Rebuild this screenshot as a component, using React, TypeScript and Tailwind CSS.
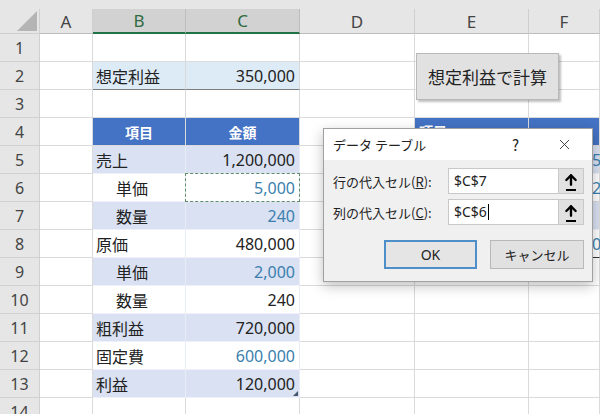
import { ArrowUp, X } from "lucide-react";

type Row = {
  n: number;
  b?: string;
  c?: string;
  indent?: boolean;
  kind?: "plain" | "goal" | "head" | "light" | "white";
  blue?: boolean;
};

const rows: Row[] = [
  { n: 1 },
  { n: 2, b: "想定利益", c: "350,000", kind: "goal" },
  { n: 3 },
  { n: 4, b: "項目", c: "金額", kind: "head" },
  { n: 5, b: "売上", c: "1,200,000", kind: "light" },
  { n: 6, b: "単価", c: "5,000", indent: true, kind: "white", blue: true },
  { n: 7, b: "数量", c: "240", indent: true, kind: "light", blue: true },
  { n: 8, b: "原価", c: "480,000", kind: "white" },
  { n: 9, b: "単価", c: "2,000", indent: true, kind: "light", blue: true },
  { n: 10, b: "数量", c: "240", indent: true, kind: "white" },
  { n: 11, b: "粗利益", c: "720,000", kind: "light" },
  { n: 12, b: "固定費", c: "600,000", kind: "white", blue: true },
  { n: 13, b: "利益", c: "120,000", kind: "light" },
  { n: 14 },
];

const cols = ["A", "B", "C", "D", "E", "F"];

const cellBase = "h-[28px] border-r border-b border-[#dadada] flex items-center";

function tableBg(kind?: Row["kind"]) {
  switch (kind) {
    case "goal":
      return "bg-[#ddebf7] border-b-[#7f7f7f]";
    case "head":
      return "bg-[#4472c4] text-white font-bold justify-center";
    case "light":
      return "bg-[#d9e1f2] border-r-[#e8ecf5] border-b-[#eef1f8]";
    case "white":
      return "bg-white border-r-[#e8ecf5] border-b-[#eef1f8]";
    default:
      return "bg-white";
  }
}

function RightSideCell({ n, col }: { n: number; col: "E" | "F" }) {
  // second table sitting behind the dialog
  let cls = "bg-white";
  let text = "";
  if (n === 4) cls = "bg-[#4472c4] text-white font-bold";
  if (n === 5 || n === 7) cls = "bg-[#d9e1f2] border-b-[#eef1f8]";
  if (col === "F") {
    if (n === 5) text = "5";
    if (n === 6) text = "2";
    if (n === 8) text = "0";
  }
  return (
    <div className={`${cellBase} ${cls} ${n === 8 && col === "F" ? "border-b-[#333]" : ""}`}>
      {col === "E" && n === 4 && <span className="pl-[4px] text-[14px]">項目</span>}
      {text && <span className="pl-[63px] text-[#3b7fae]">{text}</span>}
    </div>
  );
}

export default function App() {
  return (
    <div className="relative w-[600px] h-[414px] overflow-hidden bg-white text-[16px] text-[#222] font-['Noto_Sans','Noto_Sans_CJK_JP',sans-serif] leading-none">
      <div className="h-[9px] bg-[#e6e6e6]" />
      <div className="grid grid-cols-[40px_53px_93px_114px_115px_114px_71px]">
        {/* column headers */}
        <div className="h-[25px] bg-[#e6e6e6] border-r border-b border-[#cfcfcf] flex items-end justify-end p-[2px]">
          <div className="w-0 h-0 border-l-[20px] border-l-transparent border-b-[20px] border-b-[#b4b4b4]" />
        </div>
        {cols.map((c) => {
          const sel = c === "B" || c === "C";
          return (
            <div
              key={c}
              className={`h-[25px] flex items-center justify-center border-r text-[17px] ${
                sel
                  ? "bg-[#d2d2d2] text-[#2f6b3f] border-[#bdbdbd] border-b-2 border-b-[#217346]"
                  : "bg-[#e6e6e6] text-[#444] border-[#cfcfcf] border-b border-b-[#bdbdbd]"
              }`}
            >
              {c}
            </div>
          );
        })}

        {rows.map((r) => (
          <div key={r.n} className="contents">
            <div className="h-[28px] bg-[#e6e6e6] border-r border-b border-[#d0d0d0] flex items-center justify-center text-[#444] text-[16px]">
              {r.n}
            </div>
            <div className={`${cellBase}`} />
            <div className={`${cellBase} ${tableBg(r.kind)} ${r.kind !== "head" ? "pl-[3px]" : "text-[14px]"}`}>
              {r.indent && <span className="w-[20px]" />}
              <span className="font-['Noto_Sans_CJK_JP',sans-serif]">{r.b}</span>
            </div>
            <div
              className={`${cellBase} relative ${tableBg(r.kind)} ${
                r.kind === "head" ? "text-[14px]" : "justify-end pr-[4px]"
              } ${r.blue ? "text-[#3b7fae]" : ""}`}
            >
              {r.n === 6 && (
                <div className="absolute inset-[-1px] border border-dashed border-[#5e8f68]" />
              )}
              <span className={r.kind === "head" ? "font-['Noto_Sans_CJK_JP',sans-serif]" : ""}>{r.c}</span>
              {r.n === 13 && (
                <div className="absolute right-[1px] bottom-[1px] w-0 h-0 border-l-[5px] border-l-transparent border-b-[5px] border-b-[#44546a]" />
              )}
            </div>
            <div className={`${cellBase}`} />
            {r.n >= 4 && r.n <= 8 ? (
              <>
                <RightSideCell n={r.n} col="E" />
                <RightSideCell n={r.n} col="F" />
              </>
            ) : (
              <>
                <div className={`${cellBase}`} />
                <div className={`${cellBase}`} />
              </>
            )}
          </div>
        ))}
      </div>

      {/* shape button on the sheet */}
      <div className="absolute left-[416px] top-[53px] w-[143px] h-[47px] bg-[#e1e1e1] border border-[#b8b8b8] shadow-[2px_2px_2px_rgba(0,0,0,0.25)] flex items-center justify-center text-[17px] text-[#222] font-['Noto_Sans_CJK_JP',sans-serif]">
        想定利益で計算
      </div>

      {/* data table dialog */}
      <div className="absolute left-[323px] top-[128px] w-[270px] h-[154px] bg-[#f0f0f0] border border-[#a0a0a0] shadow-[0_4px_12px_rgba(0,0,0,0.25)] font-['Noto_Sans_CJK_JP',sans-serif] text-[13px] text-[#222]">
        <div className="h-[31px] bg-white flex items-center pl-[9px]">
          <span className="flex-1">データ テーブル</span>
          <span className="w-[44px] text-[15px]">?</span>
          <span className="w-[36px]">
            <X size={17} strokeWidth={1.2} className="text-[#222]" />
          </span>
        </div>
        <div className="flex flex-col gap-[5px] pt-[8px] pl-[9px]">
          {[
            { label: "行の代入セル(", key: "R", value: "$C$7", caret: false },
            { label: "列の代入セル(", key: "C", value: "$C$6", caret: true },
          ].map((f) => (
            <div key={f.key} className="flex items-center h-[26px]">
              <span className="w-[115px]">
                {f.label}
                <span className="underline">{f.key}</span>):
              </span>
              <div className="w-[111px] h-[26px] bg-white border border-[#c8c8c8] flex items-center pl-[5px] text-[14px] font-['Noto_Sans',sans-serif]">
                {f.value}
                {f.caret && <span className="inline-block w-px h-[16px] bg-black ml-px" />}
              </div>
              <div className="w-[25px] h-[26px] bg-[#e1e1e1] border border-[#c8c8c8] border-l-0 flex flex-col items-center justify-center gap-[1px]">
                <ArrowUp size={16} strokeWidth={3.5} className="text-black" />
                <div className="w-[10px] h-[2px] bg-black" />
              </div>
            </div>
          ))}
        </div>
        <div className="flex gap-[13px] pl-[60px] pt-[15px]">
          <div className="w-[93px] h-[29px] bg-[#e5e5e5] border-2 border-[#4f8fc9] flex items-center justify-center text-[14px] font-['Noto_Sans',sans-serif]">
            OK
          </div>
          <div className="w-[94px] h-[29px] bg-[#e1e1e1] border border-[#b8b8b8] flex items-center justify-center text-[13px]">
            キャンセル
          </div>
        </div>
      </div>
    </div>
  );
}
